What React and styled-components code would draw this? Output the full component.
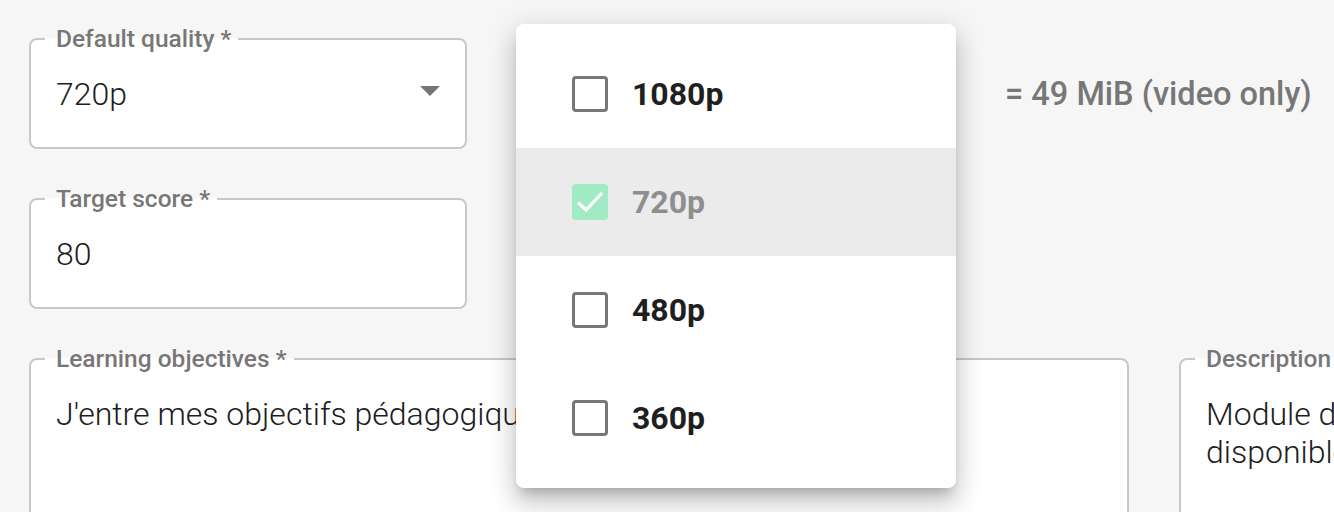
import React from "react";
import styled, { createGlobalStyle } from "styled-components";

const Global = createGlobalStyle`
  html, body { margin: 0; padding: 0; background: #f6f6f6; }
  body { font-family: Roboto, "Noto Sans", sans-serif; overflow: hidden; }
`;

const Page = styled.div`
  position: relative;
  width: 1334px;
  height: 512px;
  overflow: hidden;
  padding: 24px 0 0 29px;
  box-sizing: border-box;
  display: flex;
  flex-direction: column;
  gap: 35px;
`;

const Row = styled.div`
  display: flex;
  align-items: flex-start;
  gap: ${(p) => p.$gap || 0}px;
`;

const Field = styled.fieldset`
  margin: 0;
  width: ${(p) => p.$width}px;
  flex: none;
  box-sizing: border-box;
  border: 2px solid #c8c8c8;
  border-radius: 8px;
  background: #fff;
  padding: 21px 25px ${(p) => p.$bottom || 34}px;
  min-width: 0;
`;

const Legend = styled.legend`
  font-size: 24.5px;
  line-height: 30px;
  font-weight: 500;
  color: #777;
  margin-left: -11px;
  padding: 0 7px 0 11px;
  white-space: nowrap;
`;

const ValueRow = styled.div`
  display: flex;
  align-items: center;
  justify-content: space-between;
  height: 38px;
`;

const Value = styled.div`
  font-size: 32px;
  font-weight: 300;
  line-height: 38px;
  color: #1d1d1d;
  white-space: nowrap;
`;

const Arrow = styled.span`
  width: 0;
  height: 0;
  border-left: 10px solid transparent;
  border-right: 10px solid transparent;
  border-top: 10px solid #757575;
  margin-top: -6px;
`;

const SizeInfo = styled.div`
  margin-left: 538px;
  margin-top: 51px;
  font-size: 32.5px;
  line-height: 38px;
  font-weight: 500;
  color: #777;
  white-space: nowrap;
`;

const Menu = styled.ul`
  position: absolute;
  left: 516px;
  top: 24px;
  width: 440px;
  margin: 0;
  padding: 16px 0;
  list-style: none;
  background: #fff;
  border-radius: 8px;
  box-shadow: 0 10px 12px -6px rgba(0, 0, 0, 0.2),
    0 16px 22px 2px rgba(0, 0, 0, 0.12), 0 6px 28px 5px rgba(0, 0, 0, 0.1);
  box-sizing: border-box;
`;

const Item = styled.li`
  height: 108px;
  display: flex;
  align-items: center;
  gap: 24px;
  padding-left: 56px;
  background: ${(p) => (p.$selected ? "#ebebeb" : "transparent")};
  font-size: 32px;
  font-weight: 700;
  color: ${(p) => (p.$selected ? "#8e8e8e" : "#1f1f1f")};
`;

const Box = styled.span`
  width: 36px;
  height: 36px;
  box-sizing: border-box;
  border-radius: 4px;
  border: ${(p) => (p.$checked ? "none" : "3px solid #777")};
  background: ${(p) => (p.$checked ? "#a0ebc4" : "#fff")};
  display: flex;
  align-items: center;
  justify-content: center;
  flex: none;
`;

const Check = () => (
  <svg width="36" height="36" viewBox="0 0 36 36">
    <path
      d="M6 18.5 L14 26 L30 9"
      fill="none"
      stroke="#fff"
      strokeWidth="3.2"
      strokeLinecap="butt"
      strokeLinejoin="miter"
    />
  </svg>
);

const options = [
  { label: "1080p" },
  { label: "720p", selected: true },
  { label: "480p" },
  { label: "360p" },
];

export default function App() {
  return (
    <>
      <Global />
      <Page>
        <Row>
          <Field $width={438}>
            <Legend>Default quality *</Legend>
            <ValueRow>
              <Value>720p</Value>
              <Arrow />
            </ValueRow>
          </Field>
          <SizeInfo>= 49 MiB (video only)</SizeInfo>
        </Row>
        <Row>
          <Field $width={438}>
            <Legend>Target score *</Legend>
            <ValueRow>
              <Value>80</Value>
            </ValueRow>
          </Field>
        </Row>
        <Row $gap={50}>
          <Field $width={1100} $bottom={120}>
            <Legend>Learning objectives *</Legend>
            <Value>J'entre mes objectifs pédagogiques ici</Value>
          </Field>
          <Field $width={600} $bottom={120}>
            <Legend>Description</Legend>
            <Value>Module de formation vidéo</Value>
            <Value>disponible en ligne</Value>
          </Field>
        </Row>
        <Menu>
          {options.map((o) => (
            <Item key={o.label} $selected={o.selected}>
              <Box $checked={o.selected}>{o.selected && <Check />}</Box>
              {o.label}
            </Item>
          ))}
        </Menu>
      </Page>
    </>
  );
}
